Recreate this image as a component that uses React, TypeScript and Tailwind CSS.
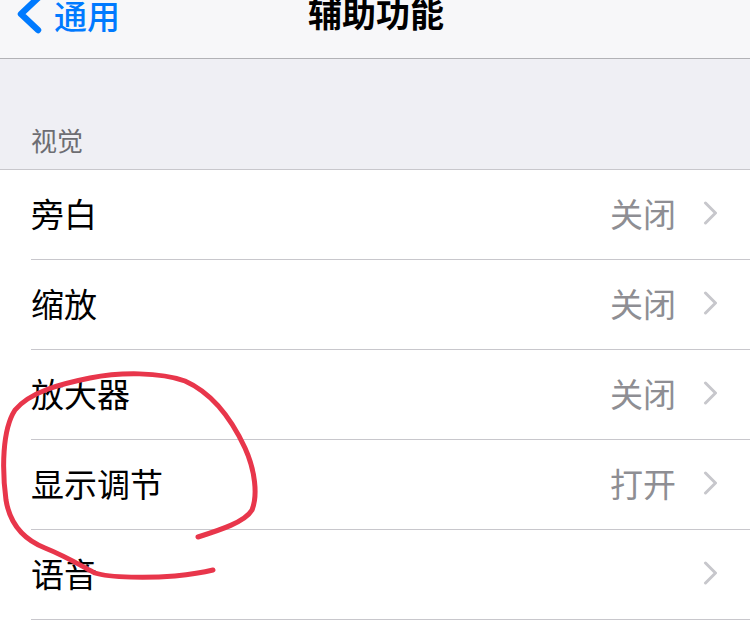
import React from "react";

interface Row {
  label: string;
  value?: string;
}

const rows: Row[] = [
  { label: "旁白", value: "关闭" },
  { label: "缩放", value: "关闭" },
  { label: "放大器", value: "关闭" },
  { label: "显示调节", value: "打开" },
  { label: "语音" },
];

const font = { fontFamily: '"Noto Sans CJK SC", "Noto Sans", sans-serif' };

const Chevron = () => (
  <svg width="15" height="24" viewBox="0 0 15 24" fill="none">
    <path
      d="M2.5 2 L12.5 12 L2.5 22"
      stroke="#c7c7cc"
      strokeWidth="3"
      strokeLinecap="round"
      strokeLinejoin="round"
    />
  </svg>
);

const BackIcon = () => (
  <svg width="28" height="38" viewBox="0 0 28 38" fill="none">
    <path
      d="M22 2 L5 18 L22 34"
      stroke="#007aff"
      strokeWidth="6.5"
      strokeLinecap="round"
      strokeLinejoin="round"
    />
  </svg>
);

const SettingsRow: React.FC<Row> = ({ label, value }) => (
  <div className="flex h-[90px] items-center pl-[31px]">
    <div className="flex h-full flex-1 items-center border-b border-[#c8c7cc] pb-[3px] pr-[32px]">
      <span className="flex-1 text-[33px] leading-none text-black">{label}</span>
      {value && (
        <span className="mr-[27px] text-[33px] leading-none text-[#8e8e93]">
          {value}
        </span>
      )}
      <Chevron />
    </div>
  </div>
);

export default function App() {
  return (
    <div className="relative h-[633px] w-[750px] overflow-hidden bg-white" style={font}>
      {/* nav bar */}
      <div className="relative h-[59px] border-b border-[#b2b2b6] bg-[#f7f7f9]">
        <div className="absolute left-[16px] top-[-4px] flex items-center">
          <BackIcon />
          <span className="ml-[10px] text-[33px] font-medium leading-[36px] text-[#007aff]">
            通用
          </span>
        </div>
        <div className="flex justify-center">
          <span className="-mt-[7px] pl-[2px] text-[34px] font-bold leading-[40px] text-black">
            辅助功能
          </span>
        </div>
      </div>

      {/* section header */}
      <div className="flex h-[111px] items-end border-b border-[#c8c7cc] bg-[#efeff4] pb-[16px] pl-[31px]">
        <span className="text-[26px] leading-none text-[#6d6d72]">视觉</span>
      </div>

      {rows.map((r) => (
        <SettingsRow key={r.label} {...r} />
      ))}

      {/* hand drawn mark */}
      <svg
        className="pointer-events-none absolute left-0 top-0"
        width="750"
        height="633"
        viewBox="0 0 750 633"
        fill="none"
      >
        <path
          d="M198 537 C220 530 245 522 252 510 C258 495 255 470 245 448 C232 420 212 393 185 381 C160 372 120 372 90 378 C60 384 30 392 15 410 C2 430 2 470 6 500 C10 525 25 540 45 548 C65 556 80 565 95 573 C110 578 150 578 175 576 C195 574 205 572 213 570"
          stroke="#e8364b"
          strokeWidth="5"
          strokeLinecap="round"
          strokeLinejoin="round"
        />
      </svg>
    </div>
  );
}
